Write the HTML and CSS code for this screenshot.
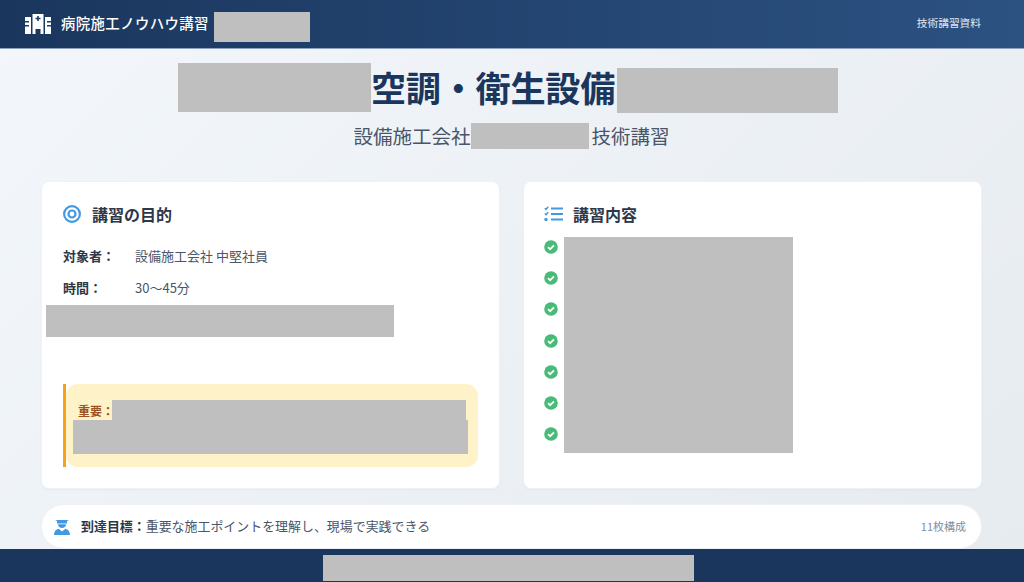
FILE: index.html
```html
<!DOCTYPE html>
<html lang="ja">
<head>
<meta charset="UTF-8">
<meta name="viewport" content="width=device-width, initial-scale=1.0">
<title>病院施工ノウハウ講習</title>
<link rel="stylesheet" href="styles.css">
</head>
<body>

<header class="topbar">
  <div class="brand">
    <svg class="brand-icon" viewBox="0 0 26 20" width="26" height="20">
      <path fill="#fff" d="M0 3h6v17H0zM20 3h6v17h-6zM7.500 0h11v20h-3v-5h-5v5h-3z"/>
      <path fill="#1f3d68" d="M12.200 2h1.600v1.700h1.700v1.600h-1.700V7h-1.600V5.300h-1.700V3.700h1.700zM0 7h4v1.500H0zM0 11h4v1.500H0zM22 7h4v1.500h-4zM22 11h4v1.500h-4z"/>
    </svg>
    <span class="brand-name">病院施工ノウハウ講習</span>
    <span class="redact brand-redact"></span>
  </div>
  <div class="doc-label">技術講習資料</div>
</header>

<main class="main">
  <h1 class="title"><span class="redact title-redact-a"></span><span class="title-text">空調・衛生設備</span><span class="redact title-redact-b"></span></h1>
  <p class="subtitle">設備施工会社<span class="redact subtitle-redact"></span>技術講習</p>

  <div class="cards">
    <section class="card">
      <h2 class="card-title">
        <svg class="card-icon target-icon" viewBox="0 0 18 18" width="18" height="18">
          <circle cx="9" cy="9" r="7.900" fill="none" stroke="#4299e1" stroke-width="2.200"/>
          <circle cx="9" cy="9" r="3.500" fill="none" stroke="#4299e1" stroke-width="2.200"/>
        </svg>
        講習の目的
      </h2>
      <div class="info-list">
        <div class="info-row"><span class="info-label">対象者：</span><span class="info-value">設備施工会社 中堅社員</span></div>
        <div class="info-row"><span class="info-label">時間：</span><span class="info-value">30〜45分</span></div>
      </div>
      <div class="redact info-redact"></div>

      <div class="notice">
        <div class="notice-body">
          <div class="notice-line"><strong class="notice-label">重要：</strong><span class="redact notice-redact-a"></span></div>
          <div class="redact notice-redact-b"></div>
        </div>
      </div>
    </section>

    <section class="card">
      <h2 class="card-title">
        <svg class="card-icon" viewBox="0 0 19 16" width="19" height="16">
          <path fill="none" stroke="#4299e1" stroke-width="1.500" d="M.8 2.200l1.200 1.200L4.200.8M.8 7.500l1.200 1.200 2.200-2.500"/>
          <circle cx="2" cy="13.500" r="1.700" fill="#4299e1"/>
          <path fill="#4299e1" d="M7 1.500h12v2H7zM7 7h12v2H7zM7 12.500h12v2H7z"/>
        </svg>
        講習内容
      </h2>
      <ul class="checklist">
        <li><svg class="check" viewBox="0 0 14 14"><use href="#check-circle"/></svg></li>
        <li><svg class="check" viewBox="0 0 14 14"><use href="#check-circle"/></svg></li>
        <li><svg class="check" viewBox="0 0 14 14"><use href="#check-circle"/></svg></li>
        <li><svg class="check" viewBox="0 0 14 14"><use href="#check-circle"/></svg></li>
        <li><svg class="check" viewBox="0 0 14 14"><use href="#check-circle"/></svg></li>
        <li><svg class="check" viewBox="0 0 14 14"><use href="#check-circle"/></svg></li>
        <li><svg class="check" viewBox="0 0 14 14"><use href="#check-circle"/></svg></li>
      </ul>
      <div class="redact list-redact"></div>
    </section>
  </div>

  <div class="goal">
    <svg class="goal-icon" viewBox="0 0 16 16" width="16" height="16">
      <path fill="#4299e1" d="M1 1h14l-2 .9v2.600H3V1.900z"/>
      <path fill="#4299e1" d="M4 5.200h8C11.800 7.700 10.200 9 8 9S4.200 7.700 4 5.200z"/>
      <path fill="#4299e1" d="M0 16c0-3.500 1.800-5.800 4.700-6.300L8 12.500l3.300-2.800c2.900.5 4.700 2.800 4.700 6.300z"/>
    </svg>
    <span class="goal-text"><strong>到達目標：</strong>重要な施工ポイントを理解し、現場で実践できる</span>
    <span class="goal-count">11枚構成</span>
  </div>
</main>

<footer class="bottombar"><span class="redact footer-redact"></span></footer>

<svg width="0" height="0" class="defs">
  <symbol id="check-circle" viewBox="0 0 14 14">
    <circle cx="7" cy="7" r="6.800" fill="#48bb78"/>
    <path fill="none" stroke="#fff" stroke-width="1.800" d="M4 7.200l2.100 2L10 5.300"/>
  </symbol>
</svg>

</body>
</html>
```

FILE: styles.css
```css
* {
  box-sizing: border-box;
}
html, body {
  height: 100%;
}
body {
  margin: 0;
  height: 582px;
  overflow: hidden;
  display: flex;
  flex-direction: column;
  font-family: "Noto Sans CJK JP", "Noto Sans", sans-serif;
  color: #2d3748;
  background: linear-gradient(135deg, #f3f7fb 0%, #e6ebf0 100%);
}
.redact {
  background-color: #bfbfbf;
}
.defs {
  position: absolute;
}

/* Header */
.topbar {
  height: 49px;
  flex-shrink: 0;
  display: flex;
  align-items: center;
  justify-content: space-between;
  padding: 0 43px 0 25px;
  color: #fff;
  background: linear-gradient(90deg, #1a365d 0%, #2c5282 100%);
  border-bottom: 1px solid #8ea2bd;
}
.brand {
  display: flex;
  align-items: center;
}
.brand-icon {
  margin-right: 10px;
}
.brand-name {
  padding-bottom: 4px;
  font-size: 14.400px;
  font-weight: 500;
  letter-spacing: .4px;
}
.brand-redact {
  width: 96px;
  height: 30px;
  margin: 6px 0 0 5px;
}
.doc-label {
  padding-bottom: 4px;
  font-size: 10.700px;
  color: #e2e8f0;
}

/* Main */
.main {
  flex: 1;
  min-height: 0;
  padding: 14px 43px 0 42px;
  display: flex;
  flex-direction: column;
}
.title {
  margin: 0 7px 0 0;
  height: 52px;
  display: flex;
  justify-content: center;
  align-items: flex-start;
  font-size: 30.600px;
  line-height: 48px;
  font-weight: 700;
  color: #1a365d;
}
.title-text {
  font-size: 35.200px;
  letter-spacing: -.3px;
}
.title-redact-a {
  width: 193px;
  height: 49px;
}
.title-redact-b {
  width: 221px;
  height: 45px;
  margin-top: 5px;
  margin-left: 2px;
}
.subtitle {
  margin: 7px 0 0;
  height: 26px;
  display: flex;
  justify-content: center;
  align-items: center;
  font-size: 19.500px;
  color: #4a5568;
}
.subtitle-redact {
  width: 118px;
  height: 26px;
  margin: 1px 3px 0 0;
}

/* Cards */
.cards {
  margin-top: 34px;
  height: 306px;
  display: flex;
  gap: 25px;
}
.card {
  position: relative;
  flex: 1;
  padding: 20px;
  background-color: #fff;
  border-radius: 7px;
  box-shadow: 0 0 0 1px #eef2f8, 0 1px 3px rgba(45, 55, 72, .08);
}
.card-title {
  margin: 0 0 5px;
  display: flex;
  align-items: center;
  font-size: 16px;
  line-height: 24px;
  font-weight: 700;
  color: #2d3748;
}
.card-icon {
  flex-shrink: 0;
  margin-right: 10px;
}
.target-icon {
  margin: 0 11px 0 1px;
}
.info-list {
  margin: 13px 0 0 1px;
}
.info-row {
  display: flex;
  height: 32px;
  align-items: center;
  font-size: 13px;
}
.info-label {
  width: 72px;
  font-weight: 700;
}
.info-value {
  color: #4a5568;
}
.info-redact {
  position: absolute;
  left: 4px;
  top: 123px;
  width: 348px;
  height: 32px;
}

/* Notice */
.notice {
  position: absolute;
  left: 21px;
  right: 21px;
  top: 202px;
  height: 83px;
  border-left: 3px solid #f6a117;
}
.notice-body {
  height: 100%;
  padding: 16px 10px 0 7px;
  background-color: #fef2c8;
  border-radius: 12px;
}
.notice-line {
  display: flex;
  height: 20px;
  align-items: center;
  padding-left: 5px;
}
.notice-label {
  flex-shrink: 0;
  width: 34px;
  font-size: 12px;
  white-space: nowrap;
  color: #9c5221;
}
.notice-redact-a {
  flex: 1;
  height: 20px;
  margin-right: 2px;
}
.notice-redact-b {
  height: 34px;
}

/* Checklist */
.checklist {
  list-style: none;
  margin: 0;
  padding: 0;
}
.checklist li {
  height: 31.300px;
  display: flex;
  align-items: center;
}
.check {
  width: 14px;
  height: 14px;
}
.list-redact {
  position: absolute;
  left: 40px;
  top: 55px;
  width: 229px;
  height: 216px;
}

/* Goal bar */
.goal {
  margin-top: 17px;
  height: 43px;
  display: flex;
  align-items: center;
  padding: 0 15px 0 12px;
  background-color: #fff;
  border-radius: 22px;
  box-shadow: 0 0 0 1px #eef2f8, 0 1px 2px rgba(45, 55, 72, .06);
}
.goal-icon {
  flex-shrink: 0;
  margin-right: 11px;
}
.goal-text {
  flex: 1;
  padding-bottom: 2px;
  font-size: 12.950px;
  color: #4a5568;
}
.goal-text strong {
  color: #2d3748;
}
.goal-count {
  padding-bottom: 2px;
  font-size: 11px;
  color: #808ea3;
}

/* Footer */
.bottombar {
  height: 33px;
  flex-shrink: 0;
  display: flex;
  justify-content: center;
  align-items: flex-end;
  padding: 0 8px 1px 0;
  background-color: #1a365d;
}
.footer-redact {
  width: 371px;
  height: 26px;
}
```
